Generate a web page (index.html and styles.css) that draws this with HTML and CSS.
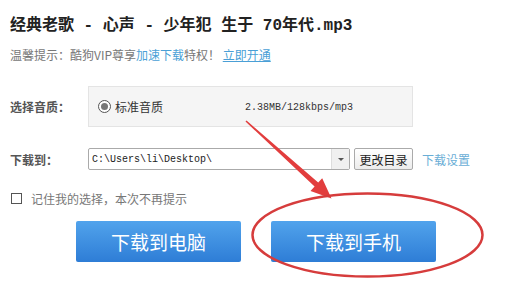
FILE: index.html
```html
<!DOCTYPE html>
<html lang="zh-CN">
<head>
<meta charset="utf-8">
<link rel="stylesheet" href="styles.css">
</head>
<body>
<div class="page">
  <h1 class="title">经典老歌 - 心声 - 少年犯 生于 70年代.mp3</h1>
  <p class="tip">温馨提示：酷狗VIP尊享<a class="link">加速下载</a>特权！ <a class="link underline">立即开通</a></p>

  <div class="row quality">
    <span class="label">选择音质：</span>
    <div class="qbox">
      <span class="radio"><span class="dot"></span></span>
      <span class="qname">标准音质</span>
      <span class="qinfo">2.38MB/128kbps/mp3</span>
    </div>
  </div>

  <div class="row dest">
    <span class="label">下载到：</span>
    <div class="combo">
      <span class="path">C:\Users\li\Desktop\</span>
      <span class="drop"><span class="tri"></span></span>
    </div>
    <button class="change">更改目录</button>
    <a class="link settings">下载设置</a>
  </div>

  <div class="remember">
    <span class="check"></span>
    <span class="rtext">记住我的选择，本次不再提示</span>
  </div>

  <div class="actions">
    <button class="big">下载到电脑</button>
    <button class="big">下载到手机</button>
  </div>

  <svg class="annot" width="520" height="291" viewBox="0 0 520 291">
    <polygon points="245.5,121.5 246.5,120.5 318.2,182.4 322.2,178.2 331.5,198.5 310.5,191 314.6,186.6" fill="#e23d3d"/>
    <ellipse cx="367.5" cy="235" rx="115" ry="41.5" fill="none" stroke="#d63c3c" stroke-width="2.5"/>
  </svg>
</div>
</body>
</html>
```

FILE: styles.css
```css
* { box-sizing: border-box; }
html, body { margin: 0; padding: 0; background: #fff; }
body {
  width: 520px;
  height: 291px;
  overflow: hidden;
  font-family: "Noto Sans CJK SC", "Liberation Sans", sans-serif;
  color: #666;
}
.page { position: relative; width: 520px; height: 291px; }

.title {
  margin: 0;
  padding: 16px 0 0 10px;
  font-family: "Liberation Mono", "Noto Sans CJK SC", monospace;
  font-size: 16px;
  line-height: 20px;
  font-weight: bold;
  color: #222;
  white-space: nowrap;
}

.tip {
  margin: 11px 0 0 0;
  padding-left: 10px;
  font-size: 12px;
  line-height: 16px;
  color: #777;
  white-space: nowrap;
}
.link { color: #4a9fd6; text-decoration: none; }
.underline { text-decoration: underline; }

.row { display: flex; align-items: center; }
.label {
  width: 88px;
  padding-left: 10px;
  font-size: 12px;
  font-weight: bold;
  color: #555;
  flex: none;
}

.quality { margin-top: 23px; }
.qbox {
  width: 325px;
  height: 41px;
  background: #f5f5f5;
  border: 1px solid #e4e4e4;
  display: flex;
  align-items: center;
  padding-left: 9px;
}
.radio {
  width: 13px; height: 13px;
  border: 1px solid #555;
  border-radius: 50%;
  display: flex; align-items: center; justify-content: center;
  background: #fff;
}
.dot { width: 7px; height: 7px; border-radius: 50%; background: #777; }
.qname {
  margin-left: 4px;
  font-size: 12px;
  color: #333;
}
.qinfo {
  margin-left: 82px;
  margin-top: 2px;
  font-family: "Liberation Mono", monospace;
  font-size: 10px;
  color: #333;
}

.dest { margin-top: 21px; height: 22px; }
.combo {
  width: 262px;
  height: 22px;
  border: 1px solid #aaa;
  border-radius: 2px;
  display: flex;
  align-items: center;
  background: #fff;
}
.path {
  flex: 1;
  padding-left: 3px;
  font-family: "Liberation Mono", monospace;
  font-size: 10px;
  color: #222;
}
.drop {
  width: 18px;
  height: 20px;
  background: #f0f0f0;
  border-left: 1px solid #ddd;
  display: flex; align-items: center; justify-content: center;
}
.tri {
  width: 0; height: 0;
  border-left: 3px solid transparent;
  border-right: 3px solid transparent;
  border-top: 3px solid #555;
}
.change {
  margin-left: 4px;
  width: 59px;
  height: 22px;
  padding: 0;
  border: 1px solid #aaa;
  border-radius: 2px;
  background: linear-gradient(#ffffff, #ececec);
  font-family: "Noto Sans CJK SC", sans-serif;
  font-size: 12px;
  color: #222;
}
.settings { margin-left: 9px; font-size: 12px; color: #6aaed6; }

.remember {
  margin-top: 20px;
  height: 16px;
  display: flex;
  align-items: center;
  padding-left: 11px;
}
.check {
  width: 11px; height: 11px;
  border: 1px solid #555;
  background: #fff;
}
.rtext { margin-left: 9px; font-size: 12px; color: #777; }

.actions {
  margin-top: 15px;
  display: flex;
  gap: 30px;
  padding-left: 76px;
}
.big {
  width: 165px;
  height: 41px;
  border: none;
  border-radius: 2px;
  background: linear-gradient(#51a3ec, #2e7dd6);
  color: #fff;
  font-family: "Noto Sans CJK SC", sans-serif;
  font-size: 19px;
  padding: 0;
}

.annot {
  position: absolute;
  left: 0; top: 0;
  pointer-events: none;
}
```
